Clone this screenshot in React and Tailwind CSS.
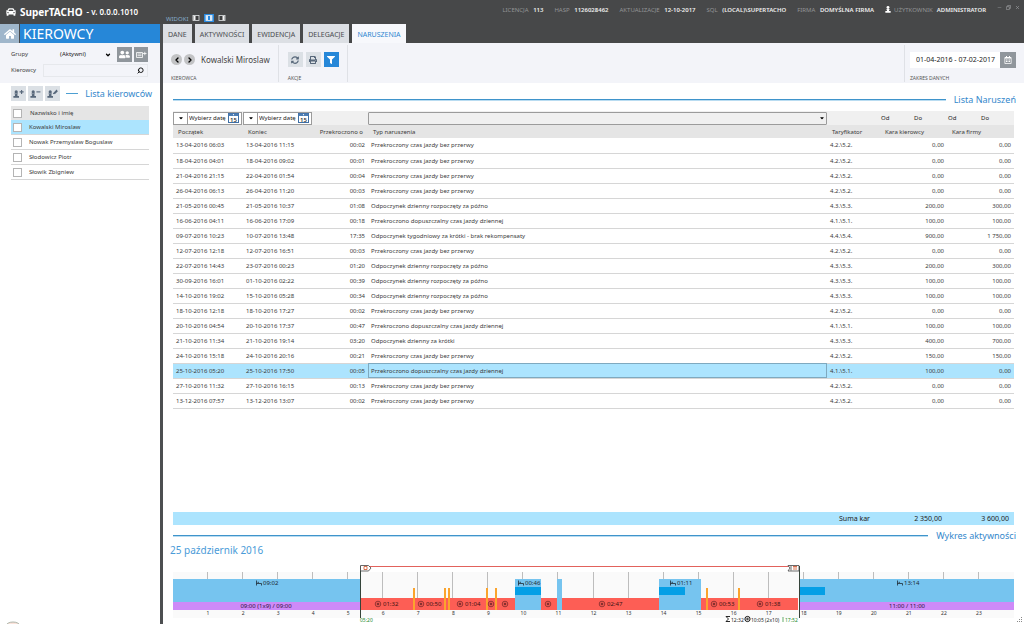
import React, { useState } from 'react'
import clsx from 'clsx'
import { ChevronDown, ChevronLeft, ChevronRight, Minus, Search, X } from 'lucide-react'
import {
  FaCar,
  FaCaretDown,
  FaFilter,
  FaHome,
  FaPrint,
  FaRegCalendarAlt,
  FaSyncAlt,
  FaUserFriends,
} from 'react-icons/fa'

const BEZ_PRZERWY = 'Przekroczony czas jazdy bez przerwy'
const ZA_POZNO = 'Odpoczynek dzienny rozpoczęty za późno'
const JAZDA_DZIENNA = 'Przekroczono dopuszczalny czas jazdy dziennej'

const violations = [
  ['13-04-2016 06:03', '13-04-2016 11:15', '00:02', BEZ_PRZERWY, '4.2.\\5.2.', '0,00', '0,00'],
  ['18-04-2016 04:01', '18-04-2016 09:02', '00:01', BEZ_PRZERWY, '4.2.\\5.2.', '0,00', '0,00'],
  ['21-04-2016 21:15', '22-04-2016 01:54', '00:04', BEZ_PRZERWY, '4.2.\\5.2.', '0,00', '0,00'],
  ['26-04-2016 06:13', '26-04-2016 11:20', '00:03', BEZ_PRZERWY, '4.2.\\5.2.', '0,00', '0,00'],
  ['21-05-2016 00:45', '21-05-2016 10:37', '01:08', ZA_POZNO, '4.3.\\5.3.', '200,00', '300,00'],
  ['16-06-2016 04:11', '16-06-2016 17:09', '00:18', JAZDA_DZIENNA, '4.1.\\5.1.', '100,00', '100,00'],
  ['09-07-2016 10:23', '10-07-2016 13:48', '17:35', 'Odpoczynek tygodniowy za krótki - brak rekompensaty', '4.4.\\5.4.', '900,00', '1 750,00'],
  ['12-07-2016 12:18', '12-07-2016 16:51', '00:03', BEZ_PRZERWY, '4.2.\\5.2.', '0,00', '0,00'],
  ['22-07-2016 14:43', '23-07-2016 00:23', '01:20', ZA_POZNO, '4.3.\\5.3.', '200,00', '300,00'],
  ['30-09-2016 16:01', '01-10-2016 02:22', '00:39', ZA_POZNO, '4.3.\\5.3.', '100,00', '100,00'],
  ['14-10-2016 19:02', '15-10-2016 05:28', '00:34', ZA_POZNO, '4.3.\\5.3.', '100,00', '100,00'],
  ['18-10-2016 12:18', '18-10-2016 17:27', '00:02', BEZ_PRZERWY, '4.2.\\5.2.', '0,00', '0,00'],
  ['20-10-2016 04:54', '20-10-2016 17:37', '00:47', JAZDA_DZIENNA, '4.1.\\5.1.', '100,00', '100,00'],
  ['21-10-2016 11:34', '21-10-2016 19:14', '03:20', 'Odpoczynek dzienny za krótki', '4.3.\\5.3.', '400,00', '700,00'],
  ['24-10-2016 15:18', '24-10-2016 20:16', '00:21', BEZ_PRZERWY, '4.2.\\5.2.', '150,00', '150,00'],
  ['25-10-2016 05:20', '25-10-2016 17:50', '00:05', JAZDA_DZIENNA, '4.1.\\5.1.', '100,00', '0,00'],
  ['27-10-2016 11:32', '27-10-2016 16:15', '00:13', BEZ_PRZERWY, '4.2.\\5.2.', '0,00', '0,00'],
  ['13-12-2016 07:57', '13-12-2016 13:07', '00:02', BEZ_PRZERWY, '4.2.\\5.2.', '0,00', '0,00'],
]

const drivers = ['Kowalski Miroslaw', 'Nowak Przemyslaw Boguslaw', 'Słodowicz Piotr', 'Słowik Zbigniew']

const tabs = ['DANE', 'AKTYWNOŚCI', 'EWIDENCJA', 'DELEGACJE', 'NARUSZENIA']

const info = [
  ['LICENCJA', '113'],
  ['HASP', '1126028462'],
  ['AKTUALIZACJE', '12-10-2017'],
  ['SQL', '(LOCAL)\\SUPERTACHO'],
  ['FIRMA', 'DOMYŚLNA FIRMA'],
]

// ------------------------------------------------------------------
// header
// ------------------------------------------------------------------
const ViewIcon = ({ bar, active }) => (
  <svg viewBox="0 0 10 8" className="w-[10px] h-2">
    {active && <rect width="10" height="8" fill="#2a8ae0" />}
    <rect x="2" y="1.5" width="6" height="5" fill={active ? '#d8ecff' : '#3c3d3e'} stroke="#e4e6e8" strokeWidth="0.8" />
    <rect x={bar} y="2" width="2" height="4" fill={active ? '#2a8ae0' : '#f4f4f4'} />
  </svg>
)

const Header = () => (
  <header className="flex h-6 bg-[#474849] text-white">
    <div className="w-[163px] shrink-0 flex items-center gap-1 pl-[6px]">
      <FaCar className="w-[10px] h-[10px]" />
      <h1 className="text-[10px] font-bold whitespace-nowrap">SuperTACHO</h1>
      <span className="text-[8px] font-semibold whitespace-nowrap">- v. 0.0.0.1010</span>
    </div>
    <div className="flex items-end gap-[3px] pl-[3px] pb-[1px]">
      <span className="text-[6px] leading-[8px] text-[#86abc9]">WIDOKI</span>
      <button aria-label="Lewy panel" className="h-[10px]"><ViewIcon bar={2.5} /></button>
      <button aria-label="Oba panele" className="h-[10px]"><ViewIcon bar={4} active /></button>
      <button aria-label="Prawy panel" className="h-[10px]"><ViewIcon bar={5.5} /></button>
    </div>
    <div className="flex-1 flex justify-end gap-[11px] pt-1 pr-1 text-[6px] leading-3 whitespace-nowrap">
      {info.map(([label, value]) => (
        <span key={label} className="text-[#929496]">
          {label} <b className="font-semibold text-[#efefef] pl-[3px]">{value}</b>
        </span>
      ))}
      <span className="flex text-[#929496]">
        <svg viewBox="0 0 7 8" className="w-[6px] h-[7px] mt-[2px] mr-[3px]" fill="#fff">
          <circle cx="3.5" cy="1.7" r="1.7" />
          <path d="M1.6 3.4h3.8v1h-0.9l0.4 1.4h1.7v2h-6.2v-2h1.7l0.4-1.4h-0.9z" />
        </svg>
        UŻYTKOWNIK <b className="font-semibold text-[#efefef] pl-1">ADMINISTRATOR</b>
      </span>
      <span className="flex gap-1 text-[#9a9c9e]">
        <button aria-label="Minimalizuj" className="h-[6px]"><Minus className="w-[5px] h-[5px]" /></button>
        <button aria-label="Przywróć" className="h-[6px]">
          <svg viewBox="0 0 6 6" className="w-[5px] h-[5px]" fill="none" stroke="currentColor" strokeWidth="0.8">
            <path d="M0.5 2h3.5v3.5h-3.5zM2 2v-1.5h3.5v3.5h-1.5" />
          </svg>
        </button>
        <button aria-label="Zamknij" className="h-[6px]"><X className="w-[5px] h-[5px]" strokeWidth={3} /></button>
      </span>
    </div>
  </header>
)

// ------------------------------------------------------------------
// sidebar
// ------------------------------------------------------------------
const PawnButton = ({ label, mark }) => (
  <button aria-label={label} className="w-[15px] h-[15px] flex items-center justify-center bg-[#dbe0e5] text-[#57677a]">
    <svg viewBox="0 0 11 10" className="w-[11px] h-[10px]" fill="currentColor">
      <circle cx="3.2" cy="2.9" r="1.6" />
      <path d="M1.4 4.4h3.6v0.9h-0.8l0.4 1.7h1.4v1.8h-5.6v-1.8h1.4l0.4-1.7h-0.8z" />
      <path d={mark} fill="none" stroke="currentColor" strokeWidth="1.1" />
    </svg>
  </button>
)

const Checkbox = ({ id }) => (
  <input
    id={id}
    type="checkbox"
    className="appearance-none w-[9px] h-[9px] shrink-0 bg-white border border-[#b4b4b4] checked:bg-[#2687d8]"
  />
)

const Sidebar = () => {
  const [selected, setSelected] = useState(0)

  return (
    <aside className="w-[163px] shrink-0 border-r-3 border-[#4d4f51] bg-white">
      <div className="flex h-[19px] bg-[#474849]">
        <a href="#home" aria-label="Start" className="w-[19px] mr-[1px] flex items-center justify-center bg-[#9fb6cb] text-white">
          <FaHome className="w-3 h-3" />
        </a>
        <h2 className="flex-1 bg-[#2687d8] text-white text-[14px] leading-[20px] pl-[3px]">KIEROWCY</h2>
      </div>

      {/* group and driver filter */}
      <div className="bg-[#f3f4f9] h-10 pl-[11px] pt-1 text-[6px] text-[#444]">
        <div className="flex items-center h-[15px]">
          <label htmlFor="group" className="w-8">Grupy</label>
          <div className="relative flex-1">
            <select id="group" className="appearance-none w-full h-3 pr-3 text-center text-[#222]">
              <option>(Aktywni)</option>
            </select>
            <ChevronDown className="absolute right-1 top-[3px] w-[6px] h-[6px] pointer-events-none text-black" strokeWidth={5} />
          </div>
          <button aria-label="Grupy kierowców" className="w-[15px] h-[15px] ml-[2px] flex items-center justify-center bg-[#90969c] text-white">
            <FaUserFriends className="w-[11px] h-[11px]" />
          </button>
          <button aria-label="Dodaj do grupy" className="w-[14px] h-[15px] ml-[2px] mr-3 flex items-center justify-center bg-[#90969c] text-white">
            <svg viewBox="0 0 11 8" className="w-[11px] h-2" fill="none" stroke="currentColor" strokeWidth="0.8">
              <path d="M0.5 1.5h6v5h-6zM1.5 3h4M1.5 4.7h4M7 2.5h3.5M8.8 0.8v3.4" />
            </svg>
          </button>
        </div>
        <div className="flex items-center h-[15px] pt-[2px]">
          <label htmlFor="driver" className="w-8">Kierowcy</label>
          <div className="flex flex-1 items-center h-[13px] mr-3 border border-[#e6e8ec]">
            <input id="driver" type="text" className="flex-1 min-w-0 h-2 pl-1 outline-none" />
            <button aria-label="Szukaj" className="mr-[3px]">
              <Search className="w-[7px] h-[7px] -scale-x-100 text-black" strokeWidth={3} />
            </button>
          </div>
        </div>
      </div>

      {/* list title */}
      <div className="flex items-center gap-[2px] pl-[11px] pr-2 pt-[3px]">
        <PawnButton label="Dodaj kierowcę" mark="M6.6 2.9h4M8.6 0.9v4" />
        <PawnButton label="Usuń kierowcę" mark="M6.4 2.9h4" />
        <PawnButton label="Edytuj kierowcę" mark="M6.2 4.8l3.8-3.8M7.4 4.9l3.1-3.1" />
        <span className="w-3 h-[1px] ml-1 bg-[#4d9fd2]" />
        <h3 className="flex-1 text-right text-[9px] text-[#3488cc] whitespace-nowrap">Lista kierowców</h3>
      </div>

      <div className="ml-[11px] mr-[11px] mt-[5px] text-[6px] text-[#3a3a3a]">
        <div className="flex items-center gap-2 h-[14px] pl-[2px] bg-[#e5e5e5]">
          <Checkbox id="all" />
          <label htmlFor="all">Nazwisko i imię</label>
        </div>
        <ul>
          {drivers.map((name, i) => (
            <li
              key={name}
              onClick={() => setSelected(i)}
              className={clsx(
                'flex items-center gap-[7px] h-[15px] pl-[2px] border-b border-[#d6d6d6]',
                i === selected && 'bg-[#ace4fe]'
              )}
            >
              <Checkbox id={`driver-${i}`} />
              <label htmlFor={`driver-${i}`}>{name}</label>
            </li>
          ))}
        </ul>
      </div>
    </aside>
  )
}

// ------------------------------------------------------------------
// violations table
// ------------------------------------------------------------------
const DateFilter = ({ label }) => (
  <div className="flex w-[69px] h-[13px] border border-[#9b9b9b] bg-white font-normal">
    <button aria-label={`${label}: warunek`} className="w-[14px] flex items-center justify-center border-r border-[#9b9b9b]">
      <FaCaretDown className="w-[6px] h-[6px] text-black" />
    </button>
    <input
      type="text"
      aria-label={label}
      placeholder="Wybierz datę"
      className="flex-1 min-w-0 pl-[1px] text-[6px] placeholder:text-[#222] outline-none"
    />
    <button aria-label={`${label}: kalendarz`} className="mr-[2px] flex items-center">
      <svg viewBox="0 0 11 10" className="w-[11px] h-[10px]">
        <rect x="0.5" y="0.5" width="10" height="9" fill="#fff" stroke="#3f6fa5" />
        <rect x="0.5" y="0.5" width="10" height="2.5" fill="#4c7db3" />
        <circle cx="5.5" cy="1.7" r="0.6" fill="#fff" />
        <text x="5.5" y="8.6" textAnchor="middle" className="text-[6px] font-semibold" fill="#333">15</text>
      </svg>
    </button>
  </div>
)

const RangeFilter = ({ label }) => (
  <div className="flex items-center h-[13px] text-[6px] font-normal text-[#222]">
    <label className="flex flex-1 min-w-0">
      Od
      <input type="text" aria-label={`${label} od`} className="flex-1 min-w-0 outline-none" />
    </label>
    <label className="flex flex-1 min-w-0">
      Do
      <input type="text" aria-label={`${label} do`} className="flex-1 min-w-0 outline-none" />
    </label>
  </div>
)

const ViolationsTable = () => {
  const [selected, setSelected] = useState(15)

  return (
    <table className="w-full table-fixed border-collapse text-[6px] leading-3 text-[#3a3a3a] whitespace-nowrap">
      <colgroup>
        <col className="w-[70px]" />
        <col className="w-[70px]" />
        <col className="w-[55px]" />
        <col />
        <col className="w-[53px]" />
        <col className="w-[67px]" />
        <col className="w-[67px]" />
      </colgroup>
      <thead>
        <tr className="h-[14px] bg-[#f0f0f0]">
          <td className="p-0"><DateFilter label="Początek" /></td>
          <td className="p-0"><DateFilter label="Koniec" /></td>
          <td />
          <td className="p-0">
            <div className="relative">
              <select aria-label="Typ naruszenia" className="appearance-none block w-full h-[13px] border border-[#9b9b9b] rounded-[1px]">
                <option></option>
              </select>
              <FaCaretDown className="absolute right-[2px] top-[3px] w-[6px] h-[6px] text-black pointer-events-none" />
            </div>
          </td>
          <td />
          <td className="p-0 pl-[1px]"><RangeFilter label="Kara kierowcy" /></td>
          <td className="p-0 pl-[1px]"><RangeFilter label="Kara firmy" /></td>
        </tr>
        <tr className="h-[13px] bg-[#e5e5e5] text-left">
          <th className="p-0 pl-[5px] font-normal">Początek</th>
          <th className="p-0 pl-[5px] font-normal">Koniec</th>
          <th className="p-0 pr-[5px] font-normal text-right">Przekroczono o</th>
          <th className="p-0 pl-[5px] font-normal">Typ naruszenia</th>
          <th className="p-0 pl-[5px] font-normal">Taryfikator</th>
          <th className="p-0 pl-[5px] font-normal">Kara kierowcy</th>
          <th className="p-0 pl-[5px] font-normal">Kara firmy</th>
        </tr>
      </thead>
      <tbody>
        {violations.map((row, i) => (
          <tr
            key={row[0]}
            onClick={() => setSelected(i)}
            className={clsx('h-[15px] border-b border-[#d6d6d6]', i === selected && 'bg-[#ace4fe]')}
          >
            <td className="p-0 pl-[3px]">{row[0]}</td>
            <td className="p-0 pl-[3px]">{row[1]}</td>
            <td className="p-0 pr-[3px] text-right">{row[2]}</td>
            <td className={clsx('p-0 pl-[3px]', i === selected && 'outline outline-1 -outline-offset-1 outline-[#7fa9bf]')}>{row[3]}</td>
            <td className="p-0 pl-[3px]">{row[4]}</td>
            <td className="p-0 pr-[3px] text-right">{row[5]}</td>
            <td className="p-0 pr-[3px] text-right">{row[6]}</td>
          </tr>
        ))}
      </tbody>
    </table>
  )
}

// ------------------------------------------------------------------
// activity chart, 841 units = 24 h
// ------------------------------------------------------------------
const HOUR = 841 / 24

const driving = [
  { x: 187, w: 155 },
  { x: 368, w: 16 },
  { x: 389, w: 97 },
  { x: 528, w: 97 },
]

const drivingLabels = [
  [202, '01:32'],
  [245, '00:50'],
  [284, '01:04'],
  [315, ''],
  [329, ''],
  [372, ''],
  [426, '02:47'],
  [538, '00:53'],
  [584, '01:38'],
]

const work = [240, 271, 275, 313, 322, 533, 565]

const Wheel = ({ x, y }) => (
  <g fill="none" stroke="#7c2b2b" strokeWidth="0.8">
    <circle cx={x + 3} cy={y} r="2.8" />
    <circle cx={x + 3} cy={y} r="1" fill="#7c2b2b" />
  </g>
)

const RestLabel = ({ x, children }) => (
  <g fill="#1d2a33">
    <path d={`M${x + 0.5} 17.5v5M${x + 0.5} 20.5h5v2M${x + 1.5} 19.3h1.5`} fill="none" stroke="#1d2a33" strokeWidth="0.8" />
    <text x={x + 7} y="22" className="text-[6px]">{children}</text>
  </g>
)

const ActivityChart = () => (
  <svg viewBox="0 0 841 61" className="block w-full" role="img" aria-label="Wykres aktywności">
    <rect y="9" width="841" height="46" fill="#fafafa" />
    {Array.from({ length: 23 }, (_, i) => (
      <g key={i}>
        <rect x={Math.round((i + 1) * HOUR) - 1} y="9" width="1" height="27" fill="#bdbdbd" />
        <text x={(i + 1) * HOUR} y="52" textAnchor="middle" fill="#333" className="text-[5px]">{i + 1}</text>
      </g>
    ))}

    {/* rest before and after the working period */}
    <rect y="16" width="187" height="23" fill="#76c4ef" />
    <rect x="626" y="16" width="215" height="23" fill="#76c4ef" />
    <rect y="39" width="187" height="8" fill="#ce8af8" />
    <rect x="626" y="39" width="215" height="8" fill="#ce8af8" />

    {driving.map((d) => (
      <rect key={d.x} x={d.x} y="35" width={d.w} height="12" fill="#fd5e55" />
    ))}

    {/* breaks */}
    <rect x="342" y="16" width="26" height="31" fill="#76c4ef" />
    <rect x="384" y="16" width="5" height="31" fill="#76c4ef" />
    <rect x="486" y="16" width="42" height="31" fill="#76c4ef" />
    <rect x="342" y="24" width="26" height="8" fill="#049fe6" />
    <rect x="486" y="24" width="26" height="8" fill="#049fe6" />
    <rect x="626" y="24" width="26" height="8" fill="#049fe6" />

    {work.map((x) => (
      <rect key={x} x={x} y="25" width="2" height="22" fill="#fba42d" />
    ))}

    {drivingLabels.map(([x, label]) => (
      <g key={x}>
        <Wheel x={x} y={41} />
        {label && <text x={x + 8} y="43" fill="#3b1414" className="text-[6px]">{label}</text>}
      </g>
    ))}

    <RestLabel x={83}>09:02</RestLabel>
    <RestLabel x={345}>00:46</RestLabel>
    <RestLabel x={497}>01:11</RestLabel>
    <RestLabel x={724}>13:14</RestLabel>
    <text x="93" y="45" textAnchor="middle" fill="#2b1238" className="text-[6px]">09:00 (1x9) / 09:00</text>
    <text x="734" y="45" textAnchor="middle" fill="#2b1238" className="text-[6px]">11:00 / 11:00</text>

    {/* working period frame */}
    <path d="M187 3.5H626" stroke="#e2625c" />
    <path d="M187.5 3v52M626.5 3v52" stroke="#35443a" />
    <path d="M187.5 2.5h8l2.5 2.5l-2.5 3h-8z" fill="#fff" stroke="#444" strokeWidth="0.8" />
    <path d="M191 3.5h3v3h-3z" fill="none" stroke="#d0532a" strokeWidth="0.8" />
    <path d="M626 2.5h-11l2 2.5l-2 3h11zM618 3v4.5" fill="#fff" stroke="#444" strokeWidth="0.8" />
    <path d="M620 3.5h4M621 3.5v3.5M623 3.5v3.5" stroke="#d0532a" strokeWidth="0.8" />
    <g className="text-[5px]">
      <text x="187" y="59" fill="#248a2c">05:20</text>
      <path d="M557 53.5h-4l2.5 2.5l-2.5 2.5h4" fill="none" stroke="#111" strokeWidth="0.9" />
      <text x="558" y="59" fill="#222">12:32</text>
      <g fill="none" stroke="#111">
        <circle cx="574.5" cy="56" r="2.6" />
        <circle cx="574.5" cy="56" r="0.8" />
      </g>
      <text x="578" y="59" fill="#222">10:05 (2x10)</text>
      <path d="M610 54v5" stroke="#248a2c" strokeWidth="0.7" />
      <text x="612" y="59" fill="#248a2c">17:52</text>
    </g>
  </svg>
)

// ------------------------------------------------------------------
// page
// ------------------------------------------------------------------
const SectionTitle = ({ children }) => (
  <div className="flex items-center gap-2 pl-[10px] pr-2">
    <span className="flex-1 h-[2px] bg-[#3f94cb] border-b border-[#b9dcf1]" />
    <h3 className="text-[9px] leading-3 text-[#3488cc] whitespace-nowrap">{children}</h3>
  </div>
)

const ToolButton = ({ label, active, children }) => (
  <button
    aria-label={label}
    className={clsx('w-[15px] h-[15px] flex items-center justify-center', active ? 'bg-[#2687d8] text-white' : 'bg-[#dbe0e5] text-[#57677a]')}
  >
    {children}
  </button>
)

const App = () => {
  const [tab, setTab] = useState('NARUSZENIA')

  return (
    <div className="relative min-h-screen flex flex-col bg-white overflow-hidden font-['Noto_Sans',sans-serif]">
      <Header />

      <div className="flex flex-1">
        <Sidebar />

        <main className="flex-1 min-w-0 flex flex-col">
          {/* tabs */}
          <nav className="flex gap-[3px] h-[19px] bg-[#474849]">
            {tabs.map((t) => (
              <button
                key={t}
                onClick={() => setTab(t)}
                className={clsx('px-[5px] pt-1 text-[7px] whitespace-nowrap', t === tab ? 'bg-[#f7f8fc] text-[#2e86d0]' : 'bg-[#dcdfe4] text-[#4a4c4f]')}
              >
                {t}
              </button>
            ))}
          </nav>

          {/* toolbar */}
          <div className="flex justify-between h-10 pt-[2px] pb-[1px] bg-[#f3f4f9] text-[5px] text-[#555]">
            <div className="flex">
              <div className="flex flex-col justify-between pl-2 pr-2 pt-[7px] border-r border-[#dfe1e6]">
                <div className="flex items-center gap-[2px] h-[15px]">
                  <button aria-label="Poprzedni" className="w-[11px] h-[11px] rounded-full bg-[#c2c3c5] flex items-center justify-center text-black">
                    <ChevronLeft className="w-2 h-2" strokeWidth={4} />
                  </button>
                  <button aria-label="Następny" className="w-[11px] h-[11px] rounded-full bg-[#c2c3c5] flex items-center justify-center text-black">
                    <ChevronRight className="w-2 h-2" strokeWidth={4} />
                  </button>
                  <span className="pl-1 text-[8px] text-[#444] whitespace-nowrap">Kowalski Miroslaw</span>
                </div>
                <span>KIEROWCA</span>
              </div>
              <div className="flex flex-col justify-between pl-[9px] pr-2 pt-[7px] border-r border-[#dfe1e6]">
                <div className="flex gap-[3px]">
                  <ToolButton label="Odśwież"><FaSyncAlt className="w-2 h-2" /></ToolButton>
                  <ToolButton label="Drukuj"><FaPrint className="w-2 h-2" /></ToolButton>
                  <ToolButton label="Filtruj" active><FaFilter className="w-2 h-2" /></ToolButton>
                </div>
                <span>AKCJE</span>
              </div>
            </div>
            <div className="flex flex-col justify-between pl-[5px] pr-2 pt-[7px] border-l border-[#dfe1e6]">
              <div className="flex h-4">
                <input
                  type="text"
                  aria-label="Zakres danych"
                  defaultValue="01-04-2016 - 07-02-2017"
                  className="w-[90px] pl-[6px] bg-white text-[7px] text-[#222] outline-none"
                />
                <button aria-label="Wybierz zakres" className="w-4 flex items-center justify-center bg-[#90969c] text-white">
                  <FaRegCalendarAlt className="w-2 h-2" />
                </button>
              </div>
              <span>ZAKRES DANYCH</span>
            </div>
          </div>

          <div className="pt-[11px]">
            <SectionTitle>Lista Naruszeń</SectionTitle>
          </div>

          {/* table */}
          <div className="flex-1 pl-[10px] pr-[10px] pt-[5px]">
            <ViolationsTable />
          </div>

          <div className="flex justify-end h-[13px] ml-[10px] mr-[10px] mb-[5px] pr-[5px] bg-[#ace4fe] text-[7px] leading-[13px] text-[#222]">
            <span>Suma kar</span>
            <span className="w-[72px] text-right">2 350,00</span>
            <span className="w-[67px] text-right">3 600,00</span>
          </div>

          {/* activity */}
          <SectionTitle>Wykres aktywności</SectionTitle>
          <h2 className="pl-[7px] mb-[5px] text-[10px] leading-4 text-[#4a9bd8]">25 październik 2016</h2>
          <div className="pl-[10px] pr-[10px]">
            <ActivityChart />
          </div>
        </main>
      </div>

      {/* window corners */}
      <svg viewBox="0 0 18 3" className="absolute left-1 bottom-0 w-[18px] h-[3px]">
        <ellipse cx="9" cy="5" rx="7" ry="4" fill="#fbe3db" stroke="#9aa79b" strokeWidth="0.8" />
      </svg>
      <svg viewBox="0 0 6 6" className="absolute right-[1px] bottom-[1px] w-[6px] h-[6px]" fill="#888">
        <path d="M4 0h1v1h-1zM4 2h1v1h-1zM2 2h1v1h-1zM4 4h1v1h-1zM2 4h1v1h-1zM0 4h1v1h-1z" />
      </svg>
    </div>
  )
}

export default App
